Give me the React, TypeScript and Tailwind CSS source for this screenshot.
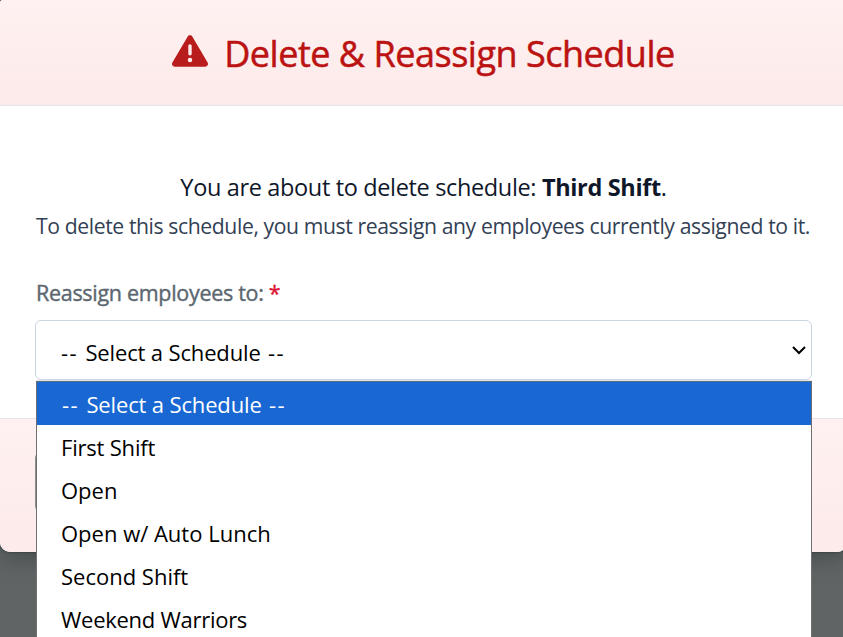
import { FaTriangleExclamation } from "react-icons/fa6";

const schedules = [
  { name: "First Shift", spacing: "tracking-[-0.2px]" },
  { name: "Open", spacing: "tracking-normal" },
  { name: "Open w/ Auto Lunch", spacing: "tracking-normal" },
  { name: "Second Shift", spacing: "tracking-normal" },
  { name: "Weekend Warriors", spacing: "tracking-[-0.27px]" },
];

function Placeholder() {
  return (
    <>
      <span className="tracking-[1.5px]">-- </span>
      <span className="tracking-[-0.14px]">Select a Schedule</span>
      <span className="tracking-[1.5px]"> --</span>
    </>
  );
}

export default function App() {
  return (
    <div className="relative h-[637px] w-[843px] overflow-hidden bg-[#606465] font-['Open_Sans','Noto_Sans',sans-serif]">
      <div className="flex h-[552px] w-[847px] flex-col overflow-hidden rounded-tl-[3px] rounded-b-[10px] bg-white shadow-[0_0_2px_#1d2728,0_4px_24px_#414748]">
        <header className="flex h-[106px] items-center justify-center gap-4 border-b border-[#e5e5e8] bg-linear-to-b from-[#fff1f1] to-[#fdeaea] text-[#b91c1c]">
          <FaTriangleExclamation className="-mt-1 size-9" />
          <h1 className="mt-[2px] text-[36px] leading-[54px] tracking-[-0.48px] whitespace-nowrap text-[#bb1212] [-webkit-text-stroke:0.5px_#bb1212]">Delete &amp; Reassign Schedule</h1>
        </header>
        <main className="flex h-[312px] flex-col px-[35px] pt-[61px]">
          <p className="h-[41px] text-center text-[23.5px] leading-10 tracking-[-0.35px] whitespace-nowrap text-[#0f172a]">
            You are about to delete schedule: <strong className="font-bold">Third Shift</strong>.
          </p>
          <p className="h-9 pl-px text-[21.2px] leading-9 tracking-[-0.41px] whitespace-nowrap text-[#334155]">
            To delete this schedule, you must reassign any employees currently assigned to it.
          </p>
          <label className="mt-8 h-[34px] pl-px text-[21.5px] leading-[34px] tracking-[-0.3px] whitespace-nowrap text-[#5c6770] [-webkit-text-stroke:0.4px_#5c6770]">
            Reassign employees to: <span className="text-[#dc1435] [-webkit-text-stroke:0.4px_#dc1435]">*</span>
          </label>
          <div className="mt-[10px] flex h-[60px] w-[777px] items-center justify-between rounded-md border border-[#cbd5e1] pr-[5px] pl-[25px] text-[22px] text-black">
            <span className="mt-1 whitespace-pre"><Placeholder /></span>
            <svg width="14" height="9" viewBox="0 0 14 9" fill="none" stroke="black" strokeWidth="2">
              <path d="M1 1l6 6 6-6" />
            </svg>
          </div>
        </main>
        <footer className="flex h-[134px] items-center border-t border-[#e5e5e8] bg-linear-to-b from-[#fff1f1] to-[#fdeaea] px-[35px]">
          <div className="-mt-2 h-[60px] w-5 rounded-md bg-[#8b8c8e]" />
        </footer>
      </div>
      <ul className="absolute top-[381px] left-9 h-[270px] w-[776px] border border-t-[#5a6d88] border-[#707070] bg-white text-[22px] text-black shadow-[0_-1px_0_#e5e5e5]">
        <li className="h-[43px] bg-[#1967d2] pl-[25px] leading-[44px] tracking-[0.1px] whitespace-pre text-white"><Placeholder /></li>
        {schedules.map(({ name, spacing }) => (
          <li key={name} className={`h-[43px] pl-6 leading-[44px] whitespace-nowrap ${spacing}`}>{name}</li>
        ))}
      </ul>
    </div>
  );
}
